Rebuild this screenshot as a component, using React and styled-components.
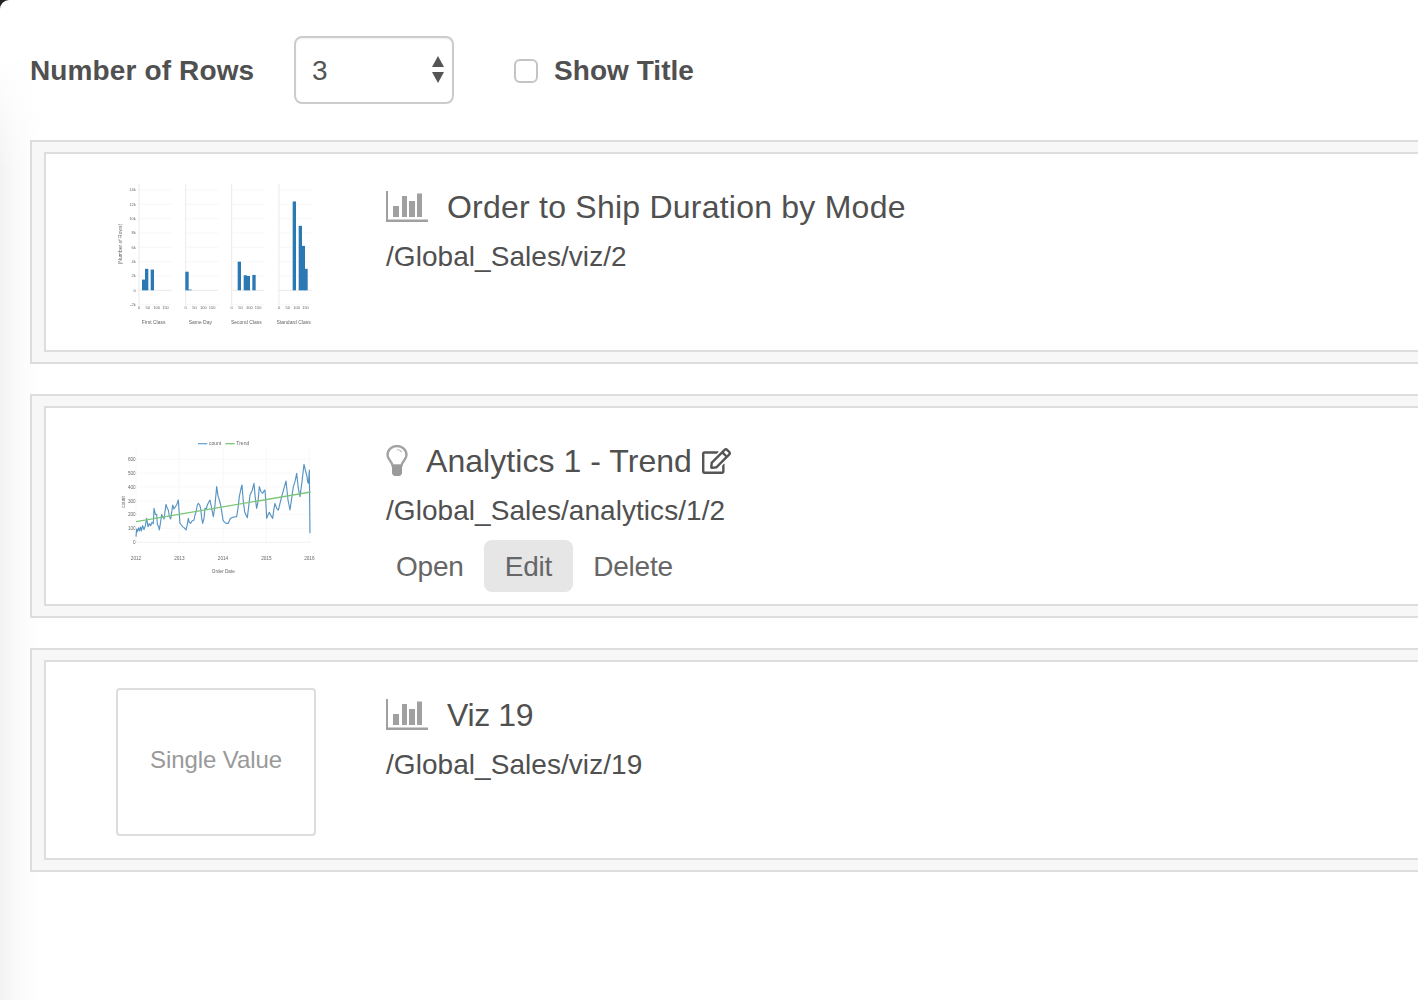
import styled, { createGlobalStyle } from "styled-components";
import { FaRegEdit } from "react-icons/fa";

const Global = createGlobalStyle`
  html, body {
    margin: 0;
    background: #222;
  }
  body {
    font-family: "Liberation Sans", Arial, sans-serif;
    color: #505050;
  }
`;

const Page = styled.div`
  min-height: 1000px;
  box-sizing: border-box;
  padding: 36px 0 0 30px;
  overflow: hidden;
  border-top-left-radius: 9px;
  background:
    linear-gradient(to bottom, #fff 60px, rgba(255, 255, 255, 0) 170px),
    linear-gradient(to right, #f3f3f3, #fafafa 16px, #fff 42px);
`;

const Toolbar = styled.div`
  display: flex;
  align-items: center;
  height: 68px;
  margin-bottom: 36px;
`;

const RowsLabel = styled.label`
  width: 264px;
  padding-top: 1px;
  font-size: 28px;
  font-weight: 700;
  letter-spacing: 0.13px;
`;

const SelectWrap = styled.div`
  position: relative;
  width: 160px;
  height: 68px;
  margin-right: 60px;
`;

const Select = styled.select`
  appearance: none;
  width: 100%;
  height: 100%;
  box-sizing: border-box;
  padding: 0 16px;
  border: 2px solid #cccccc;
  border-radius: 8px;
  background: #fff;
  box-shadow: inset 0 1px 2px rgba(0, 0, 0, 0.06);
  font: inherit;
  font-size: 28px;
  color: #555;
`;

const Arrows = styled.svg`
  position: absolute;
  top: 20px;
  right: 9px;
  width: 14px;
  height: 28px;
  pointer-events: none;
`;

const TitleToggle = styled.label`
  display: flex;
  align-items: center;
  gap: 16px;
  padding-top: 1px;
  font-size: 28px;
  font-weight: 700;
  letter-spacing: 0.05px;
`;

const Checkbox = styled.input`
  appearance: none;
  width: 24px;
  height: 24px;
  margin: 0;
  border: 2px solid #c4c4c4;
  border-radius: 6px;
  background: #fff;
`;

const List = styled.div`
  display: flex;
  flex-direction: column;
  gap: 30px;
  width: calc(100% + 30px);
`;

const Card = styled.div`
  box-sizing: border-box;
  height: 224px;
  padding: 10px 12px;
  border: 2px solid #dddddd;
  background: #f7f7f7;
`;

const CardInner = styled.div`
  box-sizing: border-box;
  display: flex;
  height: 200px;
  padding: 26px 0 0 70px;
  border: 2px solid #dddddd;
  background: #fff;
`;

const Thumb = styled.div`
  flex: none;
  width: 200px;
  height: 148px;
  margin-right: 70px;
`;

const ThumbChart = styled.svg`
  display: block;
  width: 200px;
  height: 148px;
  filter: blur(0.6px);
  font-family: "Liberation Sans", Arial, sans-serif;
  text {
    fill: #666;
  }
`;

const Placeholder = styled.div`
  display: flex;
  align-items: center;
  justify-content: center;
  box-sizing: border-box;
  width: 200px;
  height: 148px;
  padding-bottom: 4px;
  border: 2px solid #dddddd;
  border-radius: 4px;
  font-size: 24px;
  letter-spacing: -0.1px;
  color: #999;
`;

const Info = styled.div`
  display: flex;
  flex-direction: column;
`;

const TitleRow = styled.div`
  display: flex;
  align-items: center;
  height: 38px;
  margin-top: 8px;
`;

const Title = styled.span`
  font-size: 32px;
  letter-spacing: ${(p) => p.$tracking || "0"};
`;

const BarsIcon = styled.svg`
  width: 42px;
  height: 32px;
  margin-right: 19px;
`;

const BulbIcon = styled.svg`
  width: 22px;
  height: 32px;
  margin-right: 18px;
`;

const EditIcon = styled(FaRegEdit)`
  width: 29px;
  height: 26px;
  margin-left: 10px;
  color: #555;
`;

const Path = styled.div`
  margin-top: 11px;
  font-size: 28px;
  line-height: 40px;
  letter-spacing: 0.05px;
`;

const Actions = styled.div`
  display: flex;
  margin: 9px 0 0 -10px;
`;

const Action = styled.a`
  height: 52px;
  line-height: 54px;
  border-radius: 8px;
  font-size: 28px;
  letter-spacing: -0.2px;
  color: #666;
  background: ${(p) => (p.$active ? "#e6e6e6" : "transparent")};
  padding: 0 ${(p) => (p.$active ? "21px" : "20px")};
`;

const panels = [
  { x: 115, label: "First Class", bars: [[126, 1.5], [135, 3], [152, 2.9]] },
  { x: 255, label: "Same Day", bars: [[256, 2.6], [265, 0.1]] },
  { x: 393, label: "Second Class", bars: [[413, 4], [431, 2.1], [440, 2], [457, 2.15]] },
  { x: 535, label: "Standard Class", bars: [[578, 12.4], [596, 9], [605, 6.2], [613, 3]] },
];

const yTicks = [-2, 0, 2, 4, 6, 8, 10, 12, 14];

function BarsThumb() {
  const y = (v) => 361 - v * 21.5;
  return (
    <ThumbChart viewBox="48 30 600 444">
      <text x="66" y="222" fontSize="15" textAnchor="middle" transform="rotate(-90 66 222)">(Number of Rows)</text>
      {yTicks.map((t) => (
        <text key={t} x="107" y={y(t) + 4} fontSize="12" textAnchor="end">{t === 0 ? "0" : `${t}k`}</text>
      ))}
      {panels.map((p) => (
        <g key={p.label}>
          {yTicks.map((t) => (
            <line key={t} x1={p.x} x2={p.x + 100} y1={y(t)} y2={y(t)} stroke={t === 0 ? "#e0e0e0" : "#f3f3f3"} strokeWidth="2" />
          ))}
          <line x1={p.x + 2} x2={p.x + 2} y1="42" y2="405" stroke="#e6e6e6" strokeWidth="2.5" />
          {p.bars.map(([bx, v]) => (
            <rect key={bx} x={bx} y={y(v)} width="10" height={v * 21.5} fill="#2a78b4" />
          ))}
          {["0", "50", "100", "150"].map((l, i) => (
            <text key={l} x={p.x + 2 + i * 26.5} y="418" fontSize="12" textAnchor="middle">{l}</text>
          ))}
          <text x={p.x + 46} y="463" fontSize="15" textAnchor="middle">{p.label}</text>
        </g>
      ))}
    </ThumbChart>
  );
}

const trendPoints = "108,335 110,312 112,320 116,308 118,318 122,306 124,318 128,302 132,314 136,302 140,280 144,305 148,296 152,302 156,292 160,296 162,250 166,268 170,268 172,298 176,305 178,315 182,290 185,268 188,276 192,282 198,238 202,250 205,255 208,274 212,282 215,262 218,240 222,252 226,245 230,240 235,225 238,270 240,295 244,300 248,305 252,308 258,315 262,298 265,280 268,292 272,295 276,288 282,285 285,270 288,262 292,240 295,235 299,240 302,250 305,278 308,295 312,280 315,250 319,252 322,240 326,232 330,225 335,250 340,275 345,240 350,185 354,212 358,225 362,240 366,265 369,285 372,290 378,295 385,295 390,282 395,278 402,276 410,275 414,250 418,215 422,195 426,180 430,230 434,260 438,270 442,278 446,245 450,210 456,198 462,175 466,220 470,250 474,230 478,185 483,200 488,205 492,198 495,195 498,240 500,280 504,270 508,262 513,272 518,280 522,250 525,235 530,250 535,255 540,235 545,215 552,190 558,168 564,225 570,255 575,220 580,185 585,170 590,145 595,190 600,215 606,170 612,118 616,135 620,150 623,170 625,175 627,150 628,135 629,230 630,325";

const trendTicks = [0, 100, 200, 300, 400, 500, 600];
const years = [["2012", 108], ["2013", 238], ["2014", 369], ["2015", 499], ["2016", 628]];

function TrendThumb() {
  return (
    <ThumbChart viewBox="48 27 600 444">
      <line x1="294" x2="322" y1="56" y2="56" stroke="#6fa8d6" strokeWidth="4" />
      <text x="327" y="61" fontSize="15">count</text>
      <line x1="376" x2="404" y1="56" y2="56" stroke="#7ec77a" strokeWidth="4" />
      <text x="409" y="61" fontSize="15">Trend</text>
      {trendTicks.map((t) => (
        <g key={t}>
          <line x1="108" x2="632" y1={352 - t * 0.415} y2={352 - t * 0.415} stroke={t === 0 ? "#e8e8e8" : "#f6f6f6"} strokeWidth="2" />
          <text x="107" y={357 - t * 0.415} fontSize="14" textAnchor="end">{t}</text>
        </g>
      ))}
      {years.map(([l, x]) => (
        <g key={l}>
          <line x1={x} x2={x} y1="70" y2="352" stroke="#f5f5f5" strokeWidth="2" />
          <text x={x} y="406" fontSize="14" textAnchor="middle">{l}</text>
        </g>
      ))}
      <text x="74" y="231" fontSize="14" textAnchor="middle" transform="rotate(-90 74 231)">count</text>
      <text x="370" y="443" fontSize="14" textAnchor="middle">Order Date</text>
      <polyline points={trendPoints} fill="none" stroke="#2a78b4" strokeWidth="3.4" strokeLinejoin="round" opacity="0.8" />
      <line x1="108" y1="290" x2="632" y2="201" stroke="#7ec77a" strokeWidth="4" />
    </ThumbChart>
  );
}

function ChartGlyph() {
  return (
    <BarsIcon viewBox="0 0 42 32" fill="#a0a0a0">
      <rect x="0" y="0" width="2" height="31" />
      <rect x="0" y="28.5" width="42" height="2.5" />
      <rect x="7" y="15" width="6" height="11" />
      <rect x="16" y="5" width="5" height="21" />
      <rect x="23" y="10" width="6" height="16" />
      <rect x="31" y="2.5" width="5" height="23.5" />
    </BarsIcon>
  );
}

function BulbGlyph() {
  return (
    <BulbIcon viewBox="0 0 22 32">
      <path d="M6.5 20.5C6 16.5 1.5 14.5 1.5 10A9.5 9 0 0 1 20.5 10C20.5 14.5 16 16.5 15.5 20.5Z" fill="none" stroke="#a3a3a3" strokeWidth="2.4" />
      <path d="M6 20h10v8c0 1.5-1.5 3-3 3h-4c-1.5 0-3-1.5-3-3Z" fill="#9a9a9a" />
      <path d="M11 4.5c2 0 3.6.8 4.6 2.4" fill="none" stroke="#b5b5b5" strokeWidth="1.2" />
    </BulbIcon>
  );
}

export default function App() {
  return (
    <Page>
      <Global />
      <Toolbar>
        <RowsLabel>Number of Rows</RowsLabel>
        <SelectWrap>
          <Select defaultValue="3">
            <option>1</option>
            <option>2</option>
            <option>3</option>
          </Select>
          <Arrows viewBox="0 0 14 28" fill="#555">
            <path d="M7 0l6 11H1Z" />
            <path d="M7 27L1 16h12Z" />
          </Arrows>
        </SelectWrap>
        <TitleToggle>
          <Checkbox type="checkbox" />
          Show Title
        </TitleToggle>
      </Toolbar>
      <List>
        <Card>
          <CardInner>
            <Thumb><BarsThumb /></Thumb>
            <Info>
              <TitleRow>
                <ChartGlyph />
                <Title $tracking="0.23px">Order to Ship Duration by Mode</Title>
              </TitleRow>
              <Path>/Global_Sales/viz/2</Path>
            </Info>
          </CardInner>
        </Card>
        <Card>
          <CardInner>
            <Thumb><TrendThumb /></Thumb>
            <Info>
              <TitleRow>
                <BulbGlyph />
                <Title $tracking="0.05px">Analytics 1 - Trend</Title>
                <EditIcon />
              </TitleRow>
              <Path>/Global_Sales/analytics/1/2</Path>
              <Actions>
                <Action>Open</Action>
                <Action $active>Edit</Action>
                <Action>Delete</Action>
              </Actions>
            </Info>
          </CardInner>
        </Card>
        <Card>
          <CardInner>
            <Thumb><Placeholder>Single Value</Placeholder></Thumb>
            <Info>
              <TitleRow>
                <ChartGlyph />
                <Title $tracking="-0.35px">Viz 19</Title>
              </TitleRow>
              <Path>/Global_Sales/viz/19</Path>
            </Info>
          </CardInner>
        </Card>
      </List>
    </Page>
  );
}
